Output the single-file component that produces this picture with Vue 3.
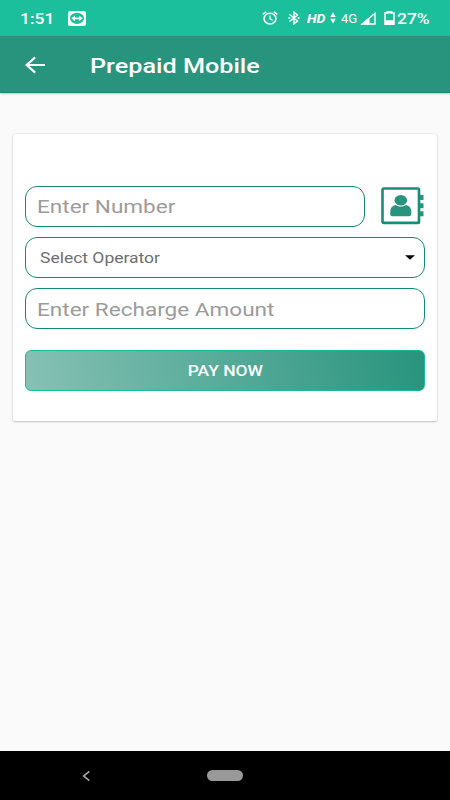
<script setup>
import { ref } from 'vue'

const number = ref('Enter Number')
const operator = ref('Select Operator')
const amount = ref('Enter Recharge Amount')
</script>

<template>
  <div class="screen">
    <div class="status">
      <span class="slot clock"><span class="wide">1:51</span></span>
      <svg class="viewer" width="18" height="15" viewBox="0 0 18 15">
        <rect width="18" height="15" rx="2" fill="#fff" />
        <ellipse cx="9" cy="7.3" rx="7" ry="5.6" fill="#1bbf9b" />
        <path d="M3.3 7.3 7 4.4v2h4v-2l3.7 2.9L11 10.2v-2H7v2z" fill="#fff" />
      </svg>
      <svg class="alarm" width="16" height="14" viewBox="0 0 16 14" fill="none" stroke="#fff">
        <ellipse cx="8" cy="7.6" rx="6" ry="5.3" stroke-width="1.5" />
        <path d="M.7 3.3 4.2.8M15.3 3.3 11.8.8" stroke-width="1.6" />
        <path d="M8 4.5v3.4l2.7 1.4" stroke-width="1.2" />
      </svg>
      <svg class="bluetooth" width="12" height="14" viewBox="0 0 12 14" fill="none" stroke="#fff" stroke-width="1.5">
        <path d="M1.5 3.5 9.5 10 6 12.8V1.2L9.5 4 1.5 10.5" />
        <path d="M.5 7h1.7M9.8 7h1.7" stroke-width="1.8" />
      </svg>
      <span class="slot hd"><span class="wide">HD</span></span>
      <svg class="updown" width="6" height="12" viewBox="0 0 6 12" fill="#fff">
        <path d="M3 .3 5.8 5H.2zM3 11.4.2 6.7h5.6z" />
      </svg>
      <span class="slot net"><span class="wide">4G</span></span>
      <svg class="signal" width="16" height="13" viewBox="0 0 16 13">
        <path d="M15 1.3V12H2.2z" fill="none" stroke="#fff" stroke-width="1.4" />
        <path d="M.8 12.6 9.5 5.6v7z" fill="#fff" />
      </svg>
      <svg class="battery" width="11" height="14" viewBox="0 0 11 14">
        <path d="M3.3.8h4.4v1.2H10v11.2H1V2h2.3z" fill="none" stroke="#fff" stroke-width="1.5" />
        <path d="M1 9.3h9v4.2H1zM3.3 0h4.4v2.4H3.3z" fill="#fff" />
      </svg>
      <span class="slot percent"><span class="wide">27%</span></span>
    </div>

    <header class="toolbar">
      <svg class="back" width="22" height="18" viewBox="0 0 22 18" fill="none" stroke="#fff" stroke-width="2.1">
        <path d="M11.2 1.4 2.6 9l8.6 7.6M2.8 9H21" />
      </svg>
      <h1 class="title"><span class="wide">Prepaid Mobile</span></h1>
    </header>

    <main class="content">
      <form class="card">
        <div class="row">
          <div class="field hint"><span class="wide">{{ number }}</span></div>
          <svg class="contacts" width="43" height="38" viewBox="0 0 43 38" fill="#28947d">
            <rect x="1.5" y="1.5" width="36.5" height="34.4" rx="1.2" fill="none" stroke="#168f78" stroke-width="2.6" />
            <path d="M39 8.1h3.5v5H39zM39 16.2h3.5v5H39zM39 24.2h3.5v5H39z" />
            <path d="M14.2 17.9c-3.3.8-5 3.5-5 7.1v2.1c0 1.4 1 2.2 2.4 2.2h16.3c1.4 0 2.4-.8 2.4-2.2V25c0-3.6-1.7-6.3-5-7.1-1.5.9-3.5 1.5-5.5 1.5s-4.1-.6-5.6-1.5z" />
            <ellipse cx="19.8" cy="13.3" rx="6.3" ry="5.2" />
          </svg>
        </div>
        <div class="field select">
          <span class="wide">{{ operator }}</span>
          <svg width="10" height="5" viewBox="0 0 10 5"><path d="M0 .2h10L5 4.7z" /></svg>
        </div>
        <div class="field hint amount"><span class="wide">{{ amount }}</span></div>
        <button class="pay" type="button"><span class="wide">PAY NOW</span></button>
      </form>
    </main>

    <nav class="navbar">
      <svg class="chevron" width="9" height="12" viewBox="0 0 9 12" fill="none" stroke="#a5a5a5" stroke-width="1.6">
        <path d="M7.4 1.4 1.6 6l5.8 4.6" />
      </svg>
      <span class="home"></span>
    </nav>
  </div>
</template>

<style>
body { background: #fafafa; }
</style>

<style scoped>
.screen {
  display: flex;
  flex-direction: column;
  width: 450px;
  height: 800px;
  overflow: hidden;
  background: #fafafa;
  font-family: Roboto, "Liberation Sans", sans-serif;
}
.wide {
  display: inline-block;
  white-space: nowrap;
  transform: scaleX(1.165);
  transform-origin: 0 50%;
}
.status {
  display: flex;
  align-items: center;
  height: 36px;
  flex: none;
  box-sizing: border-box;
  padding-left: 20px;
  background: #1bbf9b;
  color: #fff;
}
.slot { flex: none; padding-top: 1px; }
.clock { width: 48px; font-size: 15px; font-weight: 500; }
.viewer { margin-right: 176px; }
.alarm { margin-right: 10px; }
.bluetooth { margin-right: 7px; }
.hd { width: 23px; padding-top: 0; font-size: 12.5px; font-weight: 700; font-style: italic; }
.hd .wide { transform: scaleX(1.12); }
.net { width: 19px; margin-left: 5px; padding-top: 0; font-size: 13.5px; }
.net .wide { transform: scaleX(0.97); }
.signal { margin: 1px 8px 0 0; }
.percent { width: 40px; margin-left: 2px; font-size: 15px; font-weight: 500; }
.toolbar {
  display: flex;
  align-items: center;
  height: 57px;
  flex: none;
  box-sizing: border-box;
  padding: 2px 0 0 24px;
  background: #28947d;
  border-bottom: 1px solid #138d75;
  box-shadow: 0 1px 2px rgba(0, 0, 0, 0.22);
}
.back { margin: 0 44px 1px 0; }
.title { margin: 0; padding-top: 2px; font-size: 21px; line-height: 25px; font-weight: 500; color: #fff; }
.title .wide { transform: scaleX(1.2); }
.content { flex: 1; padding: 41px 13px 0; }
.card {
  box-sizing: border-box;
  width: 424px;
  height: 287px;
  padding: 52px 12px 0;
  border-radius: 2px;
  background: #fff;
  box-shadow: 0 1px 2px rgba(0, 0, 0, 0.2), 0 0 2px rgba(0, 0, 0, 0.12);
}
.row { display: flex; align-items: center; margin-bottom: 10px; }
.row .field { width: 340px; }
.contacts { margin: -1px 0 0 15.5px; }
.field {
  display: flex;
  align-items: center;
  box-sizing: border-box;
  height: 41px;
  padding-left: 12px;
  border: 1px solid #158a72;
  border-radius: 12px;
}
.hint { padding: 0 0 0 11px; font-size: 19.2px; color: #9b9b9b; }
.hint .wide { transform: scaleX(1.175); }
.amount { padding-top: 1px; }
.select {
  justify-content: space-between;
  padding: 0 9px 0 14px;
  margin-bottom: 10px;
  font-size: 15px;
  color: #6e6e6e;
}
.pay {
  display: block;
  box-sizing: border-box;
  width: 400px;
  height: 41px;
  margin-top: 21px;
  padding: 0;
  border: 1px solid #18bb95;
  border-radius: 6px;
  background: linear-gradient(80deg, #86c1b5, #28947d);
  color: #fff;
  font-family: inherit;
  font-size: 15px;
  font-weight: 500;
}
.pay .wide { transform-origin: 50% 50%; }
.navbar {
  display: flex;
  align-items: center;
  height: 49px;
  flex: none;
  box-sizing: border-box;
  padding-left: 82px;
  background: #000;
}
.chevron { margin-right: 116px; }
.home { width: 36px; height: 11px; border-radius: 6px; background: #999; }
</style>
